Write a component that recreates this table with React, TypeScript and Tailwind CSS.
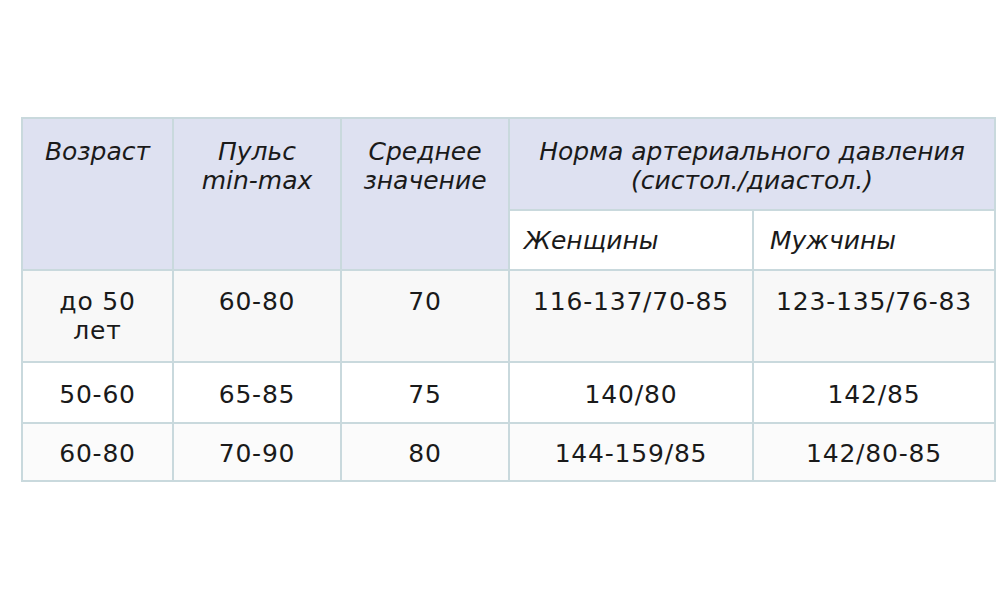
export default function App() {
  const td = "border-2 border-[#c9d9dd] align-top text-center px-2";
  return (
    <div className="w-[1008px] h-[603px] bg-white pt-[117px] pl-[21px]" style={{ fontFamily: '"DejaVu Sans", Verdana, sans-serif' }}>
      <table className="table-fixed border-collapse text-[25px] leading-[29px] text-[#1a1a1a]">
        <colgroup>
          <col className="w-[151px]" />
          <col className="w-[168px]" />
          <col className="w-[168px]" />
          <col className="w-[244px]" />
          <col className="w-[242px]" />
        </colgroup>
        <thead className="italic">
          <tr className="h-[92px] bg-[#dee1f1]">
            <th rowSpan={2} className={`${td} font-normal pt-[18px]`}>Возраст</th>
            <th rowSpan={2} className={`${td} font-normal pt-[18px]`}>Пульс<br />min-max</th>
            <th rowSpan={2} className={`${td} font-normal pt-[18px]`}>Среднее<br />значение</th>
            <th colSpan={2} className={`${td} font-normal pt-[18px]`}>Норма артериального давления<br />(систол./диастол.)</th>
          </tr>
          <tr className="h-[60px] bg-white">
            <th className={`${td} font-normal text-left pl-[14px] pt-[15px]`}>Женщины</th>
            <th className={`${td} font-normal text-left pl-[16px] pt-[15px]`}>Мужчины</th>
          </tr>
        </thead>
        <tbody className="tracking-[0.8px]">
          <tr className="h-[92px] bg-[#f8f8f8]">
            <td className={`${td} pt-[16px]`}>до 50<br />лет</td>
            <td className={`${td} pt-[16px]`}>60-80</td>
            <td className={`${td} pt-[16px]`}>70</td>
            <td className={`${td} pt-[16px]`}>116-137/70-85</td>
            <td className={`${td} pt-[16px]`}>123-135/76-83</td>
          </tr>
          <tr className="h-[61px] bg-white">
            <td className={`${td} pt-[17px]`}>50-60</td>
            <td className={`${td} pt-[17px]`}>65-85</td>
            <td className={`${td} pt-[17px]`}>75</td>
            <td className={`${td} pt-[17px]`}>140/80</td>
            <td className={`${td} pt-[17px]`}>142/85</td>
          </tr>
          <tr className="h-[58px] bg-[#fbfbfb]">
            <td className={`${td} pt-[15px]`}>60-80</td>
            <td className={`${td} pt-[15px]`}>70-90</td>
            <td className={`${td} pt-[15px]`}>80</td>
            <td className={`${td} pt-[15px]`}>144-159/85</td>
            <td className={`${td} pt-[15px]`}>142/80-85</td>
          </tr>
        </tbody>
      </table>
    </div>
  );
}
